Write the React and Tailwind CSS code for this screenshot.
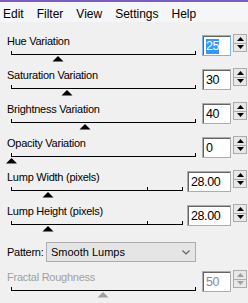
import React from 'react';

const rows = [
  { label: 'Hue Variation', value: '25', thumb: 58, focused: true },
  { label: 'Saturation Variation', value: '30', thumb: 67 },
  { label: 'Brightness Variation', value: '40', thumb: 85 },
  { label: 'Opacity Variation', value: '0', thumb: 11.5 },
  { label: 'Lump Width (pixels)', value: '28.00', thumb: 48, wide: true },
  { label: 'Lump Height (pixels)', value: '28.00', thumb: 48, wide: true },
];

// track starts at x 11; svg starts at x 5 so the thumb can overhang the left end
const Slider = ({ width, thumb, mid, disabled }) => (
  <svg width={width + 12} height="12" className="block">
    <g transform="translate(6 0)">
      <rect x="0" y="4" width={width} height="1" fill="#000" />
      <rect x="0" y="1" width="1" height="3" fill="#000" />
      <rect x={width - 1} y="1" width="1" height="3" fill="#000" />
      {mid && <rect x={mid} y="1" width="1" height="3" fill="#000" />}
      <polygon
        points={`${thumb - 5.5},11.5 ${thumb},6 ${thumb + 5.5},11.5`}
        fill={disabled ? '#a0a0a0' : '#000'}
      />
    </g>
  </svg>
);

const Spinner = ({ disabled }) => {
  const c = disabled ? '#a0a0a0' : '#000';
  return (
    <div className="mt-[2px] ml-[2px] flex h-[18px] w-[14px] flex-col border border-[#acacac] bg-[#e8e8e8]">
      <div className="flex flex-1 items-center justify-center border-b border-[#acacac]">
        <svg width="7" height="4"><polygon points="0,4 3.5,0 7,4" fill={c} /></svg>
      </div>
      <div className="flex flex-1 items-center justify-center">
        <svg width="7" height="4"><polygon points="0,0 3.5,4 7,0" fill={c} /></svg>
      </div>
    </div>
  );
};

const Field = ({ value, focused, wide, disabled }) => (
  <div
    className={`mt-[3px] h-[21px] border ${wide ? 'w-[44px]' : 'w-[29px]'} ${
      focused ? 'border-[#7eb4ea]' : 'border-[#adadad]'
    } bg-white`}
  >
    <div
      className={`flex h-full items-center border-t border-l border-[#646464] pl-[2px] text-[12.5px] leading-[15px] tracking-[-0.4px] ${
        disabled ? 'text-[#8a8a8a]' : 'text-black'
      }`}
    >
      {focused ? <span className="bg-[#3399ff] text-white">{value}</span> : value}
    </div>
  </div>
);

const Row = ({ label, value, thumb, focused, wide, disabled }) => (
  <div className="flex h-[34px]">
    <div className={`flex flex-col ${wide ? 'w-[187px]' : 'w-[202px]'}`}>
      <div
        className={`pl-[7px] pt-[3px] text-[11px] leading-[13px] tracking-[-0.25px] ${
          disabled ? 'text-[#a0a0a0]' : 'text-black'
        }`}
      >
        {label}
      </div>
      <div className="ml-[5px] mt-[2px]">
        <Slider
          width={wide ? 172 : 185}
          thumb={thumb - 11}
          mid={wide ? 136 : null}
          disabled={disabled}
        />
      </div>
    </div>
    <Field value={value} focused={focused} wide={wide} disabled={disabled} />
    <Spinner disabled={disabled} />
  </div>
);

export default function App() {
  return (
    <div
      className="h-[303px] w-[248px] overflow-hidden bg-[#f0f0f0]"
      style={{ fontFamily: '"Liberation Sans", Arial, sans-serif' }}
    >
      <div className="h-[2px] bg-[#7a5cc6]" />
      <div className="flex h-[20px] gap-[13px] bg-[#f5f6f7] pl-[3px] pt-[5px] text-[12px] leading-[15px] text-black">
        <span>Edit</span>
        <span>Filter</span>
        <span>View</span>
        <span>Settings</span>
        <span>Help</span>
      </div>
      <div className="pt-[10px]">
        {rows.map((r) => (
          <Row key={r.label} {...r} />
        ))}
        <div className="flex h-[32px] items-center pl-[7px]">
          <span className="w-[39px] text-[11px] leading-[13px] tracking-[-0.25px]">Pattern:</span>
          <div className="flex h-[20px] w-[150px] items-center justify-between border border-[#acacac] bg-[#e5e5e5] pl-[4px] pr-[5px] text-[11px] leading-[13px]">
            <span>Smooth Lumps</span>
            <svg width="8" height="5">
              <polyline points="0.5,0.5 4,4 7.5,0.5" fill="none" stroke="#606060" strokeWidth="1.2" />
            </svg>
          </div>
        </div>
        <Row label="Fractal Roughness" value="50" thumb={103} disabled />
      </div>
    </div>
  );
}
